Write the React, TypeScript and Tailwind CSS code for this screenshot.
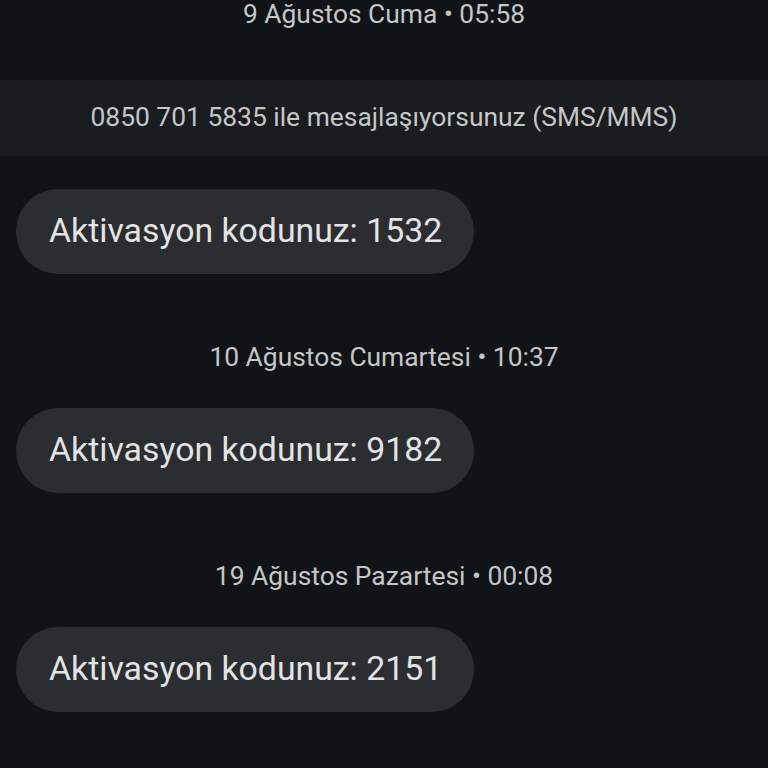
import React from "react";

function Stamp({ text, className = "" }: { text: string; className?: string }) {
  return (
    <div className={`h-[28px] leading-[28px] text-center text-[26.4px] text-[#c4c7c5] ${className}`}>
      {text}
    </div>
  );
}

function Bubble({ text, className = "" }: { text: string; className?: string }) {
  return (
    <div className={`flex ${className}`}>
      <div className="ml-[16px] h-[85px] rounded-[42px] bg-[#2b2d31] pl-[33px] pr-[32px] flex items-center text-[33.8px] text-[#e3e3e3] whitespace-nowrap">
        {text}
      </div>
    </div>
  );
}

export default function App() {
  return (
    <div
      className="w-[768px] h-[768px] overflow-hidden bg-[#111316] flex flex-col"
      style={{ fontFamily: "Roboto, 'Noto Sans', sans-serif" }}
    >
      <Stamp text="9 Ağustos Cuma • 05:58" />
      <div className="mt-[52px] h-[76px] bg-[#1a1c1f] flex items-center justify-center text-[26.4px] text-[#c4c7c5]">
        0850 701 5835 ile mesajlaşıyorsunuz (SMS/MMS)
      </div>
      <Bubble text="Aktivasyon kodunuz: 1532" className="mt-[33px]" />
      <Stamp text="10 Ağustos Cumartesi • 10:37" className="mt-[69px]" />
      <Bubble text="Aktivasyon kodunuz: 9182" className="mt-[37px]" />
      <Stamp text="19 Ağustos Pazartesi • 00:08" className="mt-[69px]" />
      <Bubble text="Aktivasyon kodunuz: 2151" className="mt-[37px]" />
    </div>
  );
}
